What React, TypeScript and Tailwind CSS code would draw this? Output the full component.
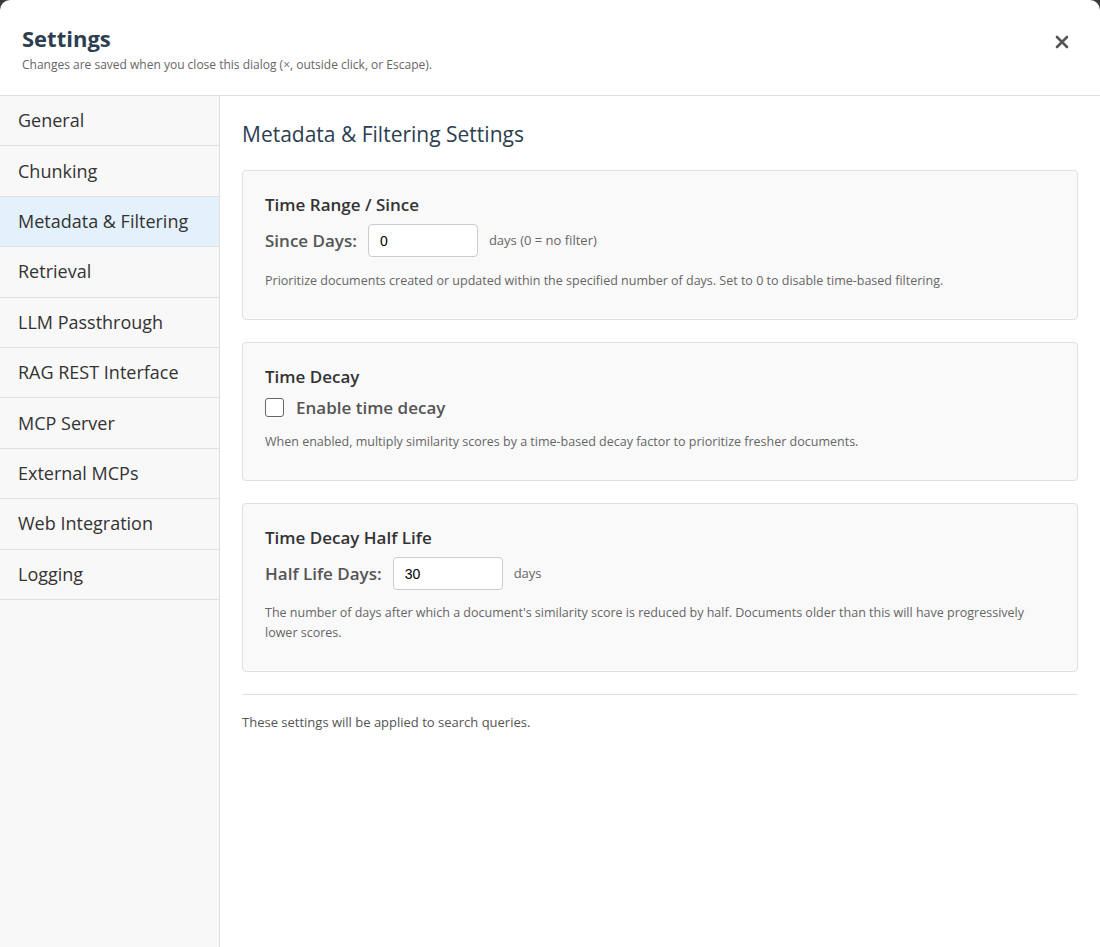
import React from 'react';

const navItems = [
  'General',
  'Chunking',
  'Metadata & Filtering',
  'Retrieval',
  'LLM Passthrough',
  'RAG REST Interface',
  'MCP Server',
  'External MCPs',
  'Web Integration',
  'Logging',
];

const App: React.FC = () => {
  return (
    <div className="h-[947px] w-[1100px] bg-[#3a3a3a] overflow-hidden" style={{ fontFamily: '"Open Sans", "Noto Sans", sans-serif' }}>
      <div className="h-full w-full bg-white rounded-t-[10px] flex flex-col">
        {/* Header */}
        <div className="h-[96px] shrink-0 border-b border-[#e0e0e0] flex items-start justify-between px-[22px] pt-[22px]">
          <div>
            <h1 className="text-[22px] font-bold text-[#2c3e50] leading-[32px]">Settings</h1>
            <p className="text-[12px] text-[#666] mt-[2px]">Changes are saved when you close this dialog (×, outside click, or Escape).</p>
          </div>
          <button className="mt-[12px] mr-[8px] text-[#555]">
            <svg width="16" height="16" viewBox="0 0 16 16" stroke="currentColor" strokeWidth="2.6" strokeLinecap="round">
              <path d="M3 3l10 10M13 3L3 13" />
            </svg>
          </button>
        </div>

        <div className="flex flex-1 min-h-0">
          {/* Sidebar */}
          <nav className="w-[220px] shrink-0 bg-[#f8f8f8] border-r border-[#e0e0e0]">
            {navItems.map((item) => (
              <div
                key={item}
                className={`h-[50.4px] flex items-center px-[18px] border-b border-[#e0e0e0] text-[18px] font-medium text-[#333] ${
                  item === 'Metadata & Filtering' ? 'bg-[#e3f1fc]' : ''
                }`}
              >
                {item}
              </div>
            ))}
          </nav>

          {/* Content */}
          <main className="flex-1 pl-[22px] pr-[22px] pt-[20px]">
            <h2 className="text-[21px] font-medium text-[#2c3e50] leading-[36px]">Metadata & Filtering Settings</h2>

            <section className="mt-[18px] bg-[#f9f9f9] border border-[#e0e0e0] rounded-[4px] px-[22px] pt-[22px] pb-[22px] h-[150px]">
              <h3 className="text-[17px] font-semibold text-[#333] leading-[24px]">Time Range / Since</h3>
              <div className="flex items-center mt-[7px]">
                <span className="text-[17px] font-semibold text-[#555]">Since Days:</span>
                <input readOnly value="0" className="ml-[11px] w-[110px] h-[33px] border border-[#ccc] rounded-[4px] bg-white px-[11px] text-[14px] text-black" style={{ fontFamily: 'Arial, sans-serif' }} />
                <span className="ml-[11px] text-[13px] text-[#666]">days (0 = no filter)</span>
              </div>
              <p className="mt-[15px] text-[12.5px] text-[#666]">Prioritize documents created or updated within the specified number of days. Set to 0 to disable time-based filtering.</p>
            </section>

            <section className="mt-[22px] bg-[#f9f9f9] border border-[#e0e0e0] rounded-[4px] px-[22px] pt-[22px] h-[139px]">
              <h3 className="text-[17px] font-semibold text-[#333] leading-[24px]">Time Decay</h3>
              <label className="flex items-center mt-[6px]">
                <span className="w-[19px] h-[19px] border-[1.5px] border-[#666] rounded-[3px] bg-white" />
                <span className="ml-[12px] text-[17px] font-semibold text-[#555]">Enable time decay</span>
              </label>
              <p className="mt-[12px] text-[12.5px] text-[#666]">When enabled, multiply similarity scores by a time-based decay factor to prioritize fresher documents.</p>
            </section>

            <section className="mt-[22px] bg-[#f9f9f9] border border-[#e0e0e0] rounded-[4px] px-[22px] pt-[22px] h-[169px]">
              <h3 className="text-[17px] font-semibold text-[#333] leading-[24px]">Time Decay Half Life</h3>
              <div className="flex items-center mt-[7px]">
                <span className="text-[17px] font-semibold text-[#555]">Half Life Days:</span>
                <input readOnly value="30" className="ml-[11px] w-[110px] h-[33px] border border-[#ccc] rounded-[4px] bg-white px-[11px] text-[14px] text-black" style={{ fontFamily: 'Arial, sans-serif' }} />
                <span className="ml-[11px] text-[13px] text-[#666]">days</span>
              </div>
              <p className="mt-[13px] text-[12.5px] leading-[20px] text-[#666]">The number of days after which a document's similarity score is reduced by half. Documents older than this will have progressively lower scores.</p>
            </section>

            <div className="mt-[22px] border-t border-[#e0e0e0] pt-[18px]">
              <p className="text-[13px] text-[#555]">These settings will be applied to search queries.</p>
            </div>
          </main>
        </div>
      </div>
    </div>
  );
};

export default App;
